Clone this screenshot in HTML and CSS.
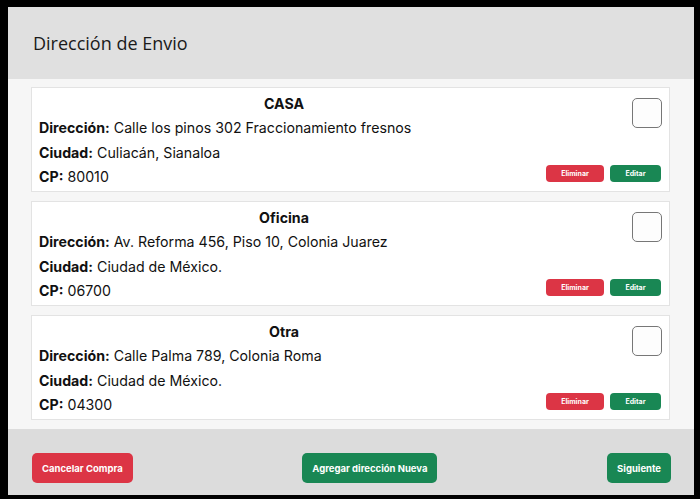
FILE: index.html
```html
<!DOCTYPE html>
<html lang="es">
<head>
<meta charset="utf-8">
<title>Dirección de Envio</title>
<link rel="stylesheet" href="styles.css">
</head>
<body>
<div class="modal">
  <header class="modal-header">
    <h1 class="modal-title">Dirección de Envio</h1>
  </header>
  <main class="modal-body">
    <div class="card">
      <div class="info">
        <div class="name">CASA</div>
        <div class="line"><b>Dirección:</b> Calle los pinos 302 Fraccionamiento fresnos</div>
        <div class="line"><b>Ciudad:</b> Culiacán, Sianaloa</div>
        <div class="line"><b>CP:</b> 80010</div>
      </div>
      <div class="side">
        <span class="check"></span>
        <div class="actions">
          <button class="btn-sm red">Eliminar</button>
          <button class="btn-sm green">Editar</button>
        </div>
      </div>
    </div>
    <div class="card">
      <div class="info">
        <div class="name">Oficina</div>
        <div class="line"><b>Dirección:</b> Av. Reforma 456, Piso 10, Colonia Juarez</div>
        <div class="line"><b>Ciudad:</b> Ciudad de México.</div>
        <div class="line"><b>CP:</b> 06700</div>
      </div>
      <div class="side">
        <span class="check"></span>
        <div class="actions">
          <button class="btn-sm red">Eliminar</button>
          <button class="btn-sm green">Editar</button>
        </div>
      </div>
    </div>
    <div class="card">
      <div class="info">
        <div class="name">Otra</div>
        <div class="line"><b>Dirección:</b> Calle Palma 789, Colonia Roma</div>
        <div class="line"><b>Ciudad:</b> Ciudad de México.</div>
        <div class="line"><b>CP:</b> 04300</div>
      </div>
      <div class="side">
        <span class="check"></span>
        <div class="actions">
          <button class="btn-sm red">Eliminar</button>
          <button class="btn-sm green">Editar</button>
        </div>
      </div>
    </div>
  </main>
  <footer class="modal-footer">
    <button class="btn red">Cancelar Compra</button>
    <button class="btn green">Agregar dirección Nueva</button>
    <button class="btn green">Siguiente</button>
  </footer>
</div>
</body>
</html>
```
FILE: styles.css
```css
* { box-sizing: border-box; }
html, body { margin: 0; padding: 0; }
body {
  background: #000;
  width: 700px;
  height: 499px;
  overflow: hidden;
  padding: 7px 6px 4px 8px;
  font-family: Inter, "Liberation Sans", sans-serif;
  color: #111;
}
.modal {
  width: 686px;
  height: 488px;
  display: flex;
  flex-direction: column;
  background: #f6f6f6;
}
.modal-header {
  height: 72px;
  background: #e0e0e0;
  display: flex;
  align-items: center;
  padding: 0 24px 0 25px;
}
.modal-title {
  margin: 0;
  font-family: "Open Sans", sans-serif;
  font-weight: 400;
  font-size: 18px;
  color: #1a1a1a;
}
.modal-body {
  height: 350px;
  padding: 8px 24px 9px 23px;
  display: flex;
  flex-direction: column;
  gap: 9px;
}
.card {
  height: 105px;
  background: #fff;
  border: 1px solid #e3e3e3;
  display: flex;
  padding: 4px 7px 3px 7px;
}
.info {
  width: 490px;
  font-size: 14.2px;
  line-height: 24.3px;
}
.name {
  text-align: center;
  font-weight: 700;
}
.line b { font-weight: 700; }
.side {
  flex: 1;
  display: flex;
  flex-direction: column;
  align-items: flex-end;
  justify-content: space-between;
  padding: 6px 0 6px 0;
}
.check {
  width: 30px;
  height: 30px;
  border: 1px solid #777;
  border-radius: 5px;
  background: #fdfdfd;
}
.actions {
  display: flex;
  gap: 6px;
  margin-right: 1px;
}
.btn-sm {
  height: 17px;
  border: none;
  border-radius: 4px;
  color: #fff;
  font-family: Inter, sans-serif;
  font-weight: 700;
  font-size: 7px;
  padding: 0;
}
.btn-sm.red { width: 58px; }
.btn-sm.green { width: 51px; }
.red { background: #dc3545; }
.green { background: #198754; }
.modal-footer {
  flex: 1;
  background: #dcdcdc;
  display: flex;
  justify-content: space-between;
  align-items: flex-start;
  padding: 24px 23px 0 24px;
}
.btn {
  height: 30px;
  border: none;
  border-radius: 5px;
  color: #fff;
  font-family: Inter, sans-serif;
  font-weight: 700;
  font-size: 9.5px;
  padding: 0 10px;
}
```
